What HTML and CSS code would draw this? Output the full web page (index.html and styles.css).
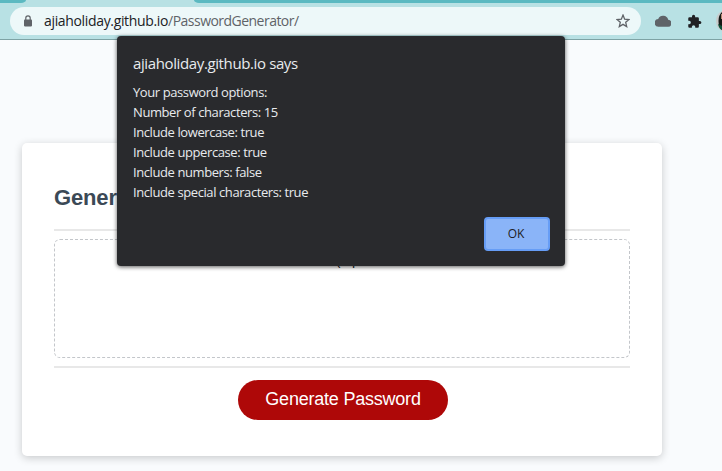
FILE: index.html
```html
<!DOCTYPE html>
<html lang="en">
<head>
<meta charset="utf-8">
<title>Password Generator</title>
<link rel="stylesheet" href="styles.css">
</head>
<body>
<div class="browser">
  <div class="tabs"><div class="tab-left"></div><div class="tab-right"></div></div>
  <header class="toolbar">
    <div class="address">
      <svg class="lock" width="8" height="12" viewBox="0 0 8 12"><path d="M1.8 5V3a2.2 2.2 0 0 1 4.4 0v2" fill="none" stroke="#5f6368" stroke-width="1.2"/><rect y="4.4" width="8" height="7" rx=".8" fill="#5f6368"/></svg>
      <span class="url"><span class="host">ajiaholiday.github.io</span><span class="path">/PasswordGenerator/</span></span>
      <svg class="star" width="14" height="14" viewBox="0 0 14 14"><path d="M7 1.1l1.65 4.05 4.35.35-3.3 2.85 1 4.25L7 10.35 3.3 12.6l1-4.25L1 5.5l4.35-.35z" fill="none" stroke="#5f6368" stroke-width="1.3"/></svg>
    </div>
    <svg class="cloud" width="16" height="12" viewBox="0 0 16 12"><path d="M4 11.8A3.9 3.9 0 0 1 3.2 4 5.3 5.3 0 0 1 13.2 4.8a3.5 3.5 0 0 1-.6 7z" fill="#5f6368"/></svg>
    <svg class="puzzle" width="15" height="15" viewBox="0 0 24 24"><path d="M20.5 11H19V7a2 2 0 0 0-2-2h-4V3.5a2.5 2.5 0 0 0-5 0V5H4a2 2 0 0 0-2 2v3.8h1.5a2.7 2.7 0 0 1 0 5.4H2V20a2 2 0 0 0 2 2h3.8v-1.5a2.7 2.7 0 0 1 5.4 0V22H17a2 2 0 0 0 2-2v-4h1.5a2.5 2.5 0 0 0 0-5z" fill="#202124"/></svg>
    <svg class="avatar" width="6" height="22" viewBox="0 0 6 22"><path d="M6 1Q0 4 0 11t6 10z" fill="#c8cccc"/><path d="M6 2Q2.5 5 2.5 11T6 20z" fill="#151715"/><path d="M2 14l4 2v4Q3 19 2 14z" fill="#0d5138"/><path d="M5 4h1v5H5z" fill="#b58b73"/></svg>
  </header>
  <main class="page">
    <section class="card">
      <h2>Genera</h2>
      <div class="card-body"><div class="password">GN(mpE</div></div>
      <div class="card-footer"><button class="generate">Generate Password</button></div>
    </section>
  </main>
</div>
<div class="dialog" role="dialog">
  <div class="title">ajiaholiday.github.io says</div>
  <div class="message">
    <div>Your password options:</div>
    <div>Number of characters: 15</div>
    <div>Include lowercase: true</div>
    <div>Include uppercase: true</div>
    <div>Include numbers: false</div>
    <div>Include special characters: true</div>
  </div>
  <button class="ok">OK</button>
</div>
</body>
</html>
```
FILE: styles.css
```css
* { box-sizing: border-box; }
body { margin: 0; height: 471px; overflow: hidden; background: #f9fbfd; font-family: "Liberation Sans", Arial, sans-serif; }
.browser { height: 471px; display: flex; flex-direction: column; }
.tabs { height: 3px; background: #b8e1e4; display: flex; justify-content: space-between; flex: none; }
.tab-left { width: 26px; background: #5bb9c1; border-bottom-right-radius: 5px 3px; }
.tab-right { width: 528px; background: #5bb9c1; border-bottom-left-radius: 5px 3px; }
.toolbar { height: 37px; flex: none; background: #b8e1e4; border-bottom: 1px solid #7ea3a5; display: flex; align-items: center; padding: 0 0 0 10px; }
.address { width: 631px; height: 28px; border-radius: 14px; background: #edf8f9; display: flex; align-items: center; padding: 0 11px 0 14px; flex: none; }
.lock { margin-right: 12px; }
.url { font: 14px/20px "Open Sans", sans-serif; color: #202124; white-space: nowrap; display: flex; }
.host { letter-spacing: -.34px; }
.path { color: #5f6368; letter-spacing: -.53px; }
.star { margin-left: auto; }
.cloud { margin-left: 14px; flex: none; }
.puzzle { margin-left: 16px; flex: none; }
.avatar { margin-left: auto; flex: none; }
.page { padding: 103px 60px 0 22px; }
.card { height: 313px; border-radius: 5px; background: #fff; box-shadow: 0 2px 8px rgba(0,0,0,.2); padding: 32px; display: flex; flex-direction: column; }
h2 { margin: 0; height: 54px; font-size: 22px; line-height: 46px; letter-spacing: -.15px; color: #3b4956; }
.card-body { height: 139px; border-top: 2px solid #e8e8e8; border-bottom: 2px solid #e8e8e8; padding: 8px 0; flex: none; }
.password { height: 119px; border: 1px dashed #c3c6ca; border-radius: 6px; padding-top: 12px; text-align: center; font-size: 14px; line-height: 16px; color: #202830; }
.card-footer { display: flex; justify-content: center; padding: 12px 0 0 2px; }
.generate { width: 210px; height: 40px; border: 0; border-radius: 20px; background: #ae0808; color: #fff; font: 18px/38px "Liberation Sans", Arial, sans-serif; letter-spacing: -.22px; padding: 0 0 2px; }
.dialog { position: absolute; left: 117px; top: 36px; width: 448px; height: 230px; padding: 16px 15px 15px 16px; background: #292a2d; border-radius: 4px; box-shadow: 0 1px 4px rgba(0,0,0,.65); color: #e8eaed; display: flex; flex-direction: column; font-family: "Open Sans", sans-serif; white-space: nowrap; }
.title { font-size: 15px; line-height: 22px; letter-spacing: -.38px; }
.message { margin-top: 8px; font-size: 13px; line-height: 20px; letter-spacing: -.41px; }
.ok { margin: auto 0 0 auto; width: 66px; height: 34px; border: 2px solid #669df6; border-radius: 4px; background: #8ab4f8; color: #202124; font: 12px/28px "Open Sans", sans-serif; letter-spacing: -.2px; padding: 0 2px 0 0; }
```
